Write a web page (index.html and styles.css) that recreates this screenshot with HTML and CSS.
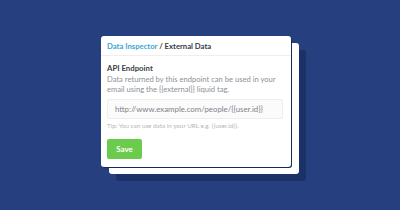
FILE: index.html
```html
<!DOCTYPE html>
<html lang="en">
<head>
    <meta charset="UTF-8">
    <title>Data Inspector - External Data</title>
    <link rel="stylesheet" href="styles.css">
</head>
<body>
    <div class="stage">
        <div class="stack">
            <div class="card">
                <div class="card-header">
                    <span class="crumb">Data Inspector</span> / External Data
                </div>
                <div class="card-body">
                    <div class="label">API Endpoint</div>
                    <p class="desc">Data returned by this endpoint can be used in your email using the {{external}} liquid tag.</p>
                    <div class="input">http://www.example.com/people/{{user.id}}</div>
                    <p class="tip">Tip: You can use data in your URL e.g. {{user.id}}.</p>
                    <button class="save-btn">Save</button>
                </div>
            </div>
        </div>
    </div>
</body>
</html>
```

FILE: styles.css
```css
* {
    margin: 0;
    padding: 0;
    box-sizing: border-box;
}

body {
    width: 400px;
    height: 210px;
    overflow: hidden;
    background-color: #253f7f;
    font-family: Lato, "Open Sans", sans-serif;
}

.stage {
    padding: 36px 0 0 101px;
}

.stack {
    position: relative;
    z-index: 0;
    width: 190px;
}

/* second sheet behind the card */
.stack::before {
    content: "";
    position: absolute;
    left: 8px;
    top: 7px;
    width: 100%;
    height: 100%;
    background-color: #ffffff;
    border-radius: 3px;
    box-shadow: 7px 7px 0 #1c3167;
    z-index: -1;
}

.card {
    height: 131px;
    background-color: #ffffff;
    border-radius: 3px;
    box-shadow: 1px 1px 0 #1b2a55;
}

.card-header {
    height: 20px;
    padding: 0 6px;
    border-bottom: 1px solid #efefef;
    font-size: 7.7px;
    font-weight: 700;
    line-height: 21px;
    color: #363c46;
}

.crumb {
    color: #3ba6d4;
}

.card-body {
    padding: 7px 6px 0;
}

.label {
    font-size: 7.8px;
    font-weight: 700;
    line-height: 11px;
    color: #3a3f47;
}

.desc {
    width: 172px;
    font-size: 7.6px;
    line-height: 10px;
    color: #8c9096;
}

.input {
    width: 176px;
    height: 20px;
    margin-top: 5px;
    padding-left: 7px;
    background-color: #fbfbfb;
    border: 1px solid #eeeeee;
    border-radius: 2px;
    font-size: 7.8px;
    line-height: 18px;
    color: #7d8288;
}

.tip {
    margin-top: 3px;
    font-size: 6.3px;
    line-height: 8px;
    color: #b3b6ba;
}

.save-btn {
    display: block;
    width: 35px;
    height: 20px;
    margin-top: 9px;
    border: none;
    border-radius: 2px;
    background-color: #6bcb4c;
    font-family: inherit;
    font-size: 8px;
    font-weight: 700;
    color: #ffffff;
}
```
